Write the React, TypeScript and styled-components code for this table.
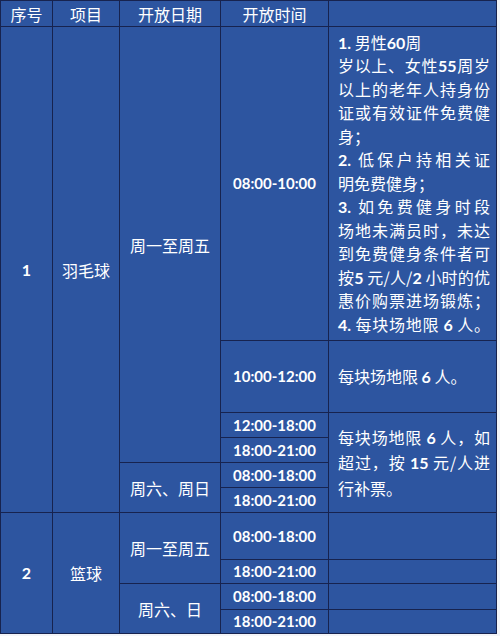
import styled, { createGlobalStyle } from "styled-components";

const GlobalStyle = createGlobalStyle`
  html, body {
    margin: 0;
    padding: 0;
    background: #f4f5f8;
  }
`;

const LINE = "#17234f";
const CELL = "#2d55a0";

const Table = styled.div`
  display: grid;
  width: 497px;
  grid-template-columns: 51px 66px 100px 107px 167px;
  grid-template-rows: 25px 313px 71px 24px 24px 24px 24px 46px 23px 25px 23px;
  gap: 1px;
  padding: 1px;
  box-sizing: border-box;
  background: ${LINE};
  font-family: "Noto Sans CJK SC", "Noto Sans", sans-serif;
  color: #ffffff;
`;

const Cell = styled.div<{ $row: number; $col: number; $span?: number; $note?: boolean }>`
  grid-row: ${(p) => p.$row} / span ${(p) => p.$span ?? 1};
  grid-column: ${(p) => p.$col};
  background: ${CELL};
  display: flex;
  align-items: center;
  justify-content: ${(p) => (p.$note ? "flex-start" : "center")};
  padding: ${(p) => (p.$note ? "0 6px 0 9px" : "0")};
  font-size: 16px;
  line-height: 1;
  min-width: 0;
  overflow: hidden;
`;

const Time = styled.span`
  font-family: Lato, "Open Sans", sans-serif;
  font-weight: 700;
  font-size: 15px;
`;

const Num = styled.span`
  font-family: Lato, "Open Sans", sans-serif;
  font-weight: 700;
`;

const Note = styled.div<{ $lh: number }>`
  width: 100%;
  font-size: 16px;
  line-height: ${(p) => p.$lh}px;
`;

const NoteLine = styled.div<{ $fill?: boolean }>`
  text-align: justify;
  text-align-last: ${(p) => (p.$fill ? "justify" : "left")};
  white-space: nowrap;
`;

const times1 = ["12:00-18:00", "18:00-21:00", "08:00-18:00", "18:00-21:00"];
const times2 = ["08:00-18:00", "18:00-21:00", "08:00-18:00", "18:00-21:00"];

export default function App() {
  return (
    <>
      <GlobalStyle />
      <Table>
        {/* header */}
        <Cell $row={1} $col={1}>序号</Cell>
        <Cell $row={1} $col={2}>项目</Cell>
        <Cell $row={1} $col={3}>开放日期</Cell>
        <Cell $row={1} $col={4}>开放时间</Cell>
        <Cell $row={1} $col={5} />

        {/* badminton */}
        <Cell $row={2} $col={1} $span={6}><Num>1</Num></Cell>
        <Cell $row={2} $col={2} $span={6}>羽毛球</Cell>
        <Cell $row={2} $col={3} $span={4}>周一至周五</Cell>
        <Cell $row={6} $col={3} $span={2}>周六、周日</Cell>

        <Cell $row={2} $col={4}><Time>08:00-10:00</Time></Cell>
        <Cell $row={3} $col={4}><Time>10:00-12:00</Time></Cell>
        {times1.map((t, i) => (
          <Cell key={"a" + i} $row={4 + i} $col={4}><Time>{t}</Time></Cell>
        ))}

        <Cell $row={2} $col={5} $note>
          <Note $lh={23.5}>
            <NoteLine><Num>1.</Num> 男性<Num>60</Num>周</NoteLine>
            <NoteLine $fill>岁以上、女性<Num>55</Num>周岁</NoteLine>
            <NoteLine $fill>以上的老年人持身份</NoteLine>
            <NoteLine $fill>证或有效证件免费健</NoteLine>
            <NoteLine>身；</NoteLine>
            <NoteLine $fill><Num>2.</Num> 低保户持相关证</NoteLine>
            <NoteLine>明免费健身；</NoteLine>
            <NoteLine $fill><Num>3.</Num> 如免费健身时段</NoteLine>
            <NoteLine $fill>场地未满员时，未达</NoteLine>
            <NoteLine $fill>到免费健身条件者可</NoteLine>
            <NoteLine $fill>按<Num>5</Num> 元/人/<Num>2</Num> 小时的优</NoteLine>
            <NoteLine $fill>惠价购票进场锻炼；</NoteLine>
            <NoteLine $fill><Num>4.</Num> 每块场地限 <Num>6</Num> 人。</NoteLine>
          </Note>
        </Cell>
        <Cell $row={3} $col={5} $note>
          <Note $lh={23}>
            <NoteLine>每块场地限 <Num>6</Num> 人。</NoteLine>
          </Note>
        </Cell>
        <Cell $row={4} $col={5} $span={4} $note>
          <Note $lh={24.5}>
            <NoteLine $fill>每块场地限 <Num>6</Num> 人，如</NoteLine>
            <NoteLine $fill>超过，按 <Num>15</Num> 元/人进</NoteLine>
            <NoteLine>行补票。</NoteLine>
          </Note>
        </Cell>

        {/* basketball */}
        <Cell $row={8} $col={1} $span={4}><Num>2</Num></Cell>
        <Cell $row={8} $col={2} $span={4}>篮球</Cell>
        <Cell $row={8} $col={3} $span={2}>周一至周五</Cell>
        <Cell $row={10} $col={3} $span={2}>周六、日</Cell>
        {times2.map((t, i) => (
          <Cell key={"b" + i} $row={8 + i} $col={4}><Time>{t}</Time></Cell>
        ))}
        {times2.map((_, i) => (
          <Cell key={"c" + i} $row={8 + i} $col={5} />
        ))}
      </Table>
    </>
  );
}
